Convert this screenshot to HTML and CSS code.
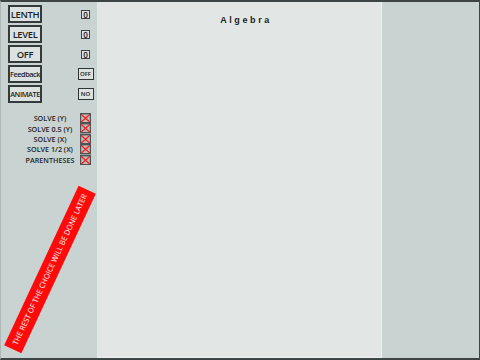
FILE: index.html
```html
<!DOCTYPE html>
<html>
<head>
<meta charset="utf-8">
<link rel="stylesheet" href="styles.css">
</head>
<body>
<div class="frame">
  <aside class="left">
    <div class="controls">
      <div class="row"><div class="btn">LENTH</div><div class="val"><span class="zero">0</span></div></div>
      <div class="row"><div class="btn">LEVEL</div><div class="val"><span class="zero">0</span></div></div>
      <div class="row"><div class="btn">OFF</div><div class="val"><span class="zero">0</span></div></div>
      <div class="row"><div class="btn small">Feedback</div><div class="val"><span class="tag">OFF</span></div></div>
      <div class="row"><div class="btn small">ANIMATE</div><div class="val"><span class="tag">NO</span></div></div>
    </div>
    <div class="checks">
      <div class="lbl">SOLVE (Y)</div><svg class="cb" viewBox="0 0 11 10"><rect x="0.5" y="0.5" width="10" height="9"/><path d="M1 1L10 9M10 1L1 9"/></svg>
      <div class="lbl">SOLVE 0.5 (Y)</div><svg class="cb" viewBox="0 0 11 10"><rect x="0.5" y="0.5" width="10" height="9"/><path d="M1 1L10 9M10 1L1 9"/></svg>
      <div class="lbl">SOLVE (X)</div><svg class="cb" viewBox="0 0 11 10"><rect x="0.5" y="0.5" width="10" height="9"/><path d="M1 1L10 9M10 1L1 9"/></svg>
      <div class="lbl">SOLVE 1/2 (X)</div><svg class="cb" viewBox="0 0 11 10"><rect x="0.5" y="0.5" width="10" height="9"/><path d="M1 1L10 9M10 1L1 9"/></svg>
      <div class="lbl">PARENTHESES</div><svg class="cb" viewBox="0 0 11 10"><rect x="0.5" y="0.5" width="10" height="9"/><path d="M1 1L10 9M10 1L1 9"/></svg>
    </div>
    <div class="banner">THE REST OF THE CHOICE WILL BE DONE LATER</div>
  </aside>
  <main class="main">
    <h1 class="title">Algebra</h1>
  </main>
  <aside class="right"></aside>
</div>
</body>
</html>
```
FILE: styles.css
```css
html, body {
  margin: 0;
  padding: 0;
}
body {
  width: 480px;
  height: 360px;
  overflow: hidden;
  background: #c9d3d1;
  font-family: "Open Sans", "Noto Sans", sans-serif;
}
.frame {
  box-sizing: border-box;
  width: 480px;
  height: 360px;
  border-top: 2px solid #3d4544;
  border-bottom: 2px solid #3d4544;
  border-right: 1px solid #3d4544;
  border-left: 1px solid #aeb7b5;
  display: flex;
  background: #c9d3d1;
}
.left {
  position: relative;
  width: 96px;
  flex: none;
  overflow: hidden;
}
.controls {
  display: flex;
  flex-direction: column;
  gap: 2px;
  padding: 3px 0 0 7px;
}
.row {
  display: flex;
  align-items: center;
  width: 86px;
  justify-content: space-between;
}
.btn {
  box-sizing: border-box;
  width: 34px;
  height: 18px;
  border: 2px solid #333a39;
  background: #dce2e0;
  color: #1c1f1f;
  font-size: 9.4px;
  font-weight: 600;
  display: flex;
  align-items: center;
  justify-content: center;
  white-space: nowrap;
  letter-spacing: -0.35px;
}
.btn.small {
  font-size: 7.3px;
  letter-spacing: -0.4px;
}
.val {
  width: 17px;
  display: flex;
  justify-content: center;
}
.zero {
  box-sizing: border-box;
  width: 9px;
  height: 9px;
  border: 1px solid #3b4342;
  background: #dce2e0;
  font-size: 8px;
  line-height: 7px;
  font-weight: 600;
  text-align: center;
  color: #111;
}
.tag {
  box-sizing: border-box;
  width: 16px;
  height: 12px;
  border: 1px solid #2f3534;
  background: #dce2e0;
  font-size: 6px;
  font-weight: 600;
  display: flex;
  align-items: center;
  justify-content: center;
  color: #111;
}
.checks {
  display: grid;
  grid-template-columns: 60px 11px;
  grid-auto-rows: 10.4px;
  padding: 10px 0 0 19px;
  align-items: center;
}
.lbl {
  text-align: center;
  font-size: 7.2px;
  font-weight: 600;
  color: #222;
  white-space: nowrap;
  line-height: 10px;
}
.cb {
  width: 11px;
  height: 10.4px;
  display: block;
}
.cb rect {
  fill: #b9bfbe;
  stroke: #4d5453;
  stroke-width: 1.4;
}
.cb path {
  stroke: #ff1a1a;
  stroke-width: 1.2;
  fill: none;
}
.banner {
  position: absolute;
  left: -39px;
  top: 258px;
  width: 176px;
  height: 19px;
  background: #ff0a0a;
  color: #fff;
  font-size: 7.5px;
  line-height: 19px;
  text-align: center;
  white-space: nowrap;
  transform: rotate(-65deg);
}
.main {
  width: 285px;
  flex: none;
  box-sizing: border-box;
  background: #e2e7e5;
  border-right: 1px solid #eef1f0;
  border-bottom: 1px solid #eef1f0;
}
.title {
  margin: 13px 0 0 0;
  padding-left: 14px;
  text-align: center;
  font-family: "Liberation Sans", sans-serif;
  font-size: 9px;
  font-weight: bold;
  letter-spacing: 2.6px;
  color: #222;
}
.right {
  flex: 1;
}
```
